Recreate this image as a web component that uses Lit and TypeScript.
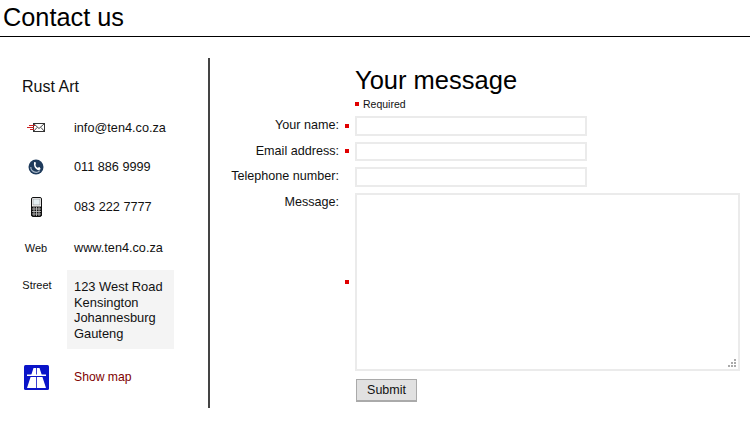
import { LitElement, html, css } from "lit";
import { customElement } from "lit/decorators.js";

@customElement("app-root")
export class AppRoot extends LitElement {
  static styles = css`
    :host { display: block; width: 750px; height: 423px; overflow: hidden; background: #fff; color: #111; font-family: "Liberation Sans", Arial, sans-serif; font-size: 13px; }
    * { box-sizing: border-box; }
    h1 { margin: 0; height: 37px; padding-left: 3px; border-bottom: 1px solid #000; font-size: 25.3px; line-height: 35px; font-weight: 400; color: #000; }
    .main { display: flex; margin-top: 21px; }
    .side { width: 210px; height: 350px; border-right: 2px solid #444; padding: 19px 0 0 0; }
    h2 { margin: 0 0 0 22px; font-size: 16px; line-height: 19px; font-weight: 400; }
    .rows { display: grid; grid-template-columns: 67px 107px; margin-top: 12px; grid-template-rows: 39px 39px 41px 41px 81px 56px; }
    .ic { display: flex; align-items: center; justify-content: center; padding-left: 5px; font-size: 11px; }
    .tx { display: flex; align-items: center; padding-left: 7px; font-size: 12.7px; }
    .street { display: block; background: #f4f4f4; padding: 9px 0 0 7px; line-height: 15.6px; margin-top: 2px; height: 79px; font-size: 12.9px; }
    .ic.top { align-items: flex-start; padding: 11px 0 0 7px; }
    a { color: #800000; text-decoration: none; font-size: 12.2px; }
    .form { flex: 1; display: grid; grid-template-columns: 129px 16px 385px; row-gap: 6px; align-content: start; }
    .form h3 { grid-column: 3; margin: 7px 0 0; font-size: 25.5px; line-height: 30px; font-weight: 400; color: #000; }
    .req { grid-column: 3; display: flex; align-items: center; gap: 4px; font-size: 10.5px; height: 12px; margin-top: -3px; }
    .dot { width: 4px; height: 4px; background: #e00000; display: block; }
    label { text-align: right; font-size: 12.6px; line-height: 18px; }
    .m { display: flex; align-items: center; justify-content: center; }
    input, textarea { display: block; margin: 0; padding: 2px; border: 2px solid #ebebeb; background: #fff; outline: none; }
    input { width: 232px; height: 19.6px; }
    textarea { width: 385px; height: 178px; resize: none; }
    .area { position: relative; width: 385px; height: 178px; }
    .grip { position: absolute; right: 3px; bottom: 3px; }
    .btnrow { grid-column: 3; margin-top: 2px; padding-left: 1px; }
    button { width: 61px; height: 23px; padding: 0; border: 1px solid #aaa; border-bottom-width: 2px; background: #e1e1e1; font-family: "Liberation Sans", sans-serif; font-size: 12.5px; color: #111; }
  `;

  render() {
    return html`
      <h1>Contact us</h1>
      <div class="main">
        <div class="side">
          <h2>Rust Art</h2>
          <div class="rows">
            <div class="ic">
              <svg width="18" height="10" viewBox="0 0 18 10">
                <rect x="6.500" y="0.500" width="11" height="8" fill="#fff" stroke="#333" />
                <path d="M6.500 .5l5.500 5 5.500-5M6.500 8.500l3.500-4M17.500 8.500l-3.500-4" fill="none" stroke="#333" stroke-width=".9" />
                <path d="M2 2.500h6M0 4.500h7M3 6.500h4" stroke="#c22" stroke-width="1" />
              </svg>
            </div>
            <div class="tx">info@ten4.co.za</div>
            <div class="ic">
              <svg width="16" height="16" viewBox="0 0 16 16">
                <circle cx="8" cy="8" r="7.500" fill="#1f3b5c" />
                <path d="M2.800 8a5.200 5.200 0 0 0 9 3.600" fill="none" stroke="#a9b8c8" stroke-width="1.200" />
                <path d="M6 3l2 .5-.5 2.500c.3 1.300 1 2.200 2 2.800l2-.8 1.200 2c-1 1.200-2.300 1.500-3.500.7C7 9.500 5.500 7 6 3z" fill="#fff" />
              </svg>
            </div>
            <div class="tx">011 886 9999</div>
            <div class="ic">
              <svg width="11" height="20" viewBox="0 0 11 20">
                <rect x="0.500" y="0.500" width="10" height="19" rx="1.500" fill="#fff" stroke="#111" />
                <rect x="2" y="2" width="7" height="6" fill="#e4eef2" stroke="#777" stroke-width=".5" />
                <path d="M.5 9.500h10v9.500H.5z" fill="#111" />
                <path d="M3 10v9M5.500 10v9M8 10v9M1 12h9M1 14.500h9M1 17h9" stroke="#ccc" stroke-width=".8" />
              </svg>
            </div>
            <div class="tx">083 222 7777</div>
            <div class="ic">Web</div>
            <div class="tx">www.ten4.co.za</div>
            <div class="ic top">Street</div>
            <div class="tx street">123 West Road<br />Kensington<br />Johannesburg<br />Gauteng</div>
            <div class="ic">
              <svg width="25" height="25" viewBox="0 0 25 25">
                <rect width="25" height="25" rx="1.500" fill="#0a14c8" />
                <path d="M9.500 3h2.600v20H3zM12.900 3h2.600L22 23h-9.100z" fill="#fff" />
                <path d="M3 9.500h19v1.500H3z" fill="#fff" />
                <path d="M3 11h19v1H3z" fill="#0a14c8" />
              </svg>
            </div>
            <div class="tx"><a href="#">Show map</a></div>
          </div>
        </div>
        <div class="form">
          <h3>Your message</h3>
          <div class="req"><span class="dot"></span>Required</div>
          <label>Your name:</label><span class="m"><span class="dot"></span></span><input />
          <label>Email address:</label><span class="m"><span class="dot"></span></span><input />
          <label>Telephone number:</label><span></span><input />
          <label>Message:</label><span class="m"><span class="dot"></span></span>
          <div class="area">
            <textarea></textarea>
            <svg class="grip" width="9" height="9" viewBox="0 0 9 9" fill="#aaa">
              <rect x="6" y="0" width="2" height="2" />
              <rect x="3" y="3" width="2" height="2" /><rect x="6" y="3" width="2" height="2" />
              <rect x="0" y="6" width="2" height="2" /><rect x="3" y="6" width="2" height="2" /><rect x="6" y="6" width="2" height="2" />
            </svg>
          </div>
          <div class="btnrow"><button>Submit</button></div>
        </div>
      </div>
    `;
  }
}
